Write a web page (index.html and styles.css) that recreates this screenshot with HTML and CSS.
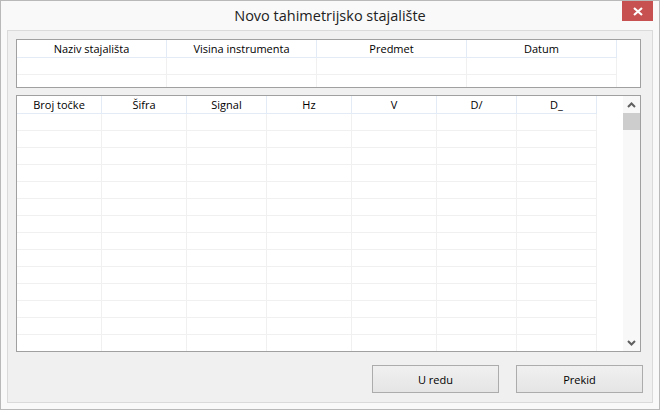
FILE: index.html
```html
<!DOCTYPE html>
<html>
<head>
<meta charset="utf-8">
<link rel="stylesheet" href="styles.css">
</head>
<body>
<div class="window">
  <div class="titlebar">
    <div class="spacer"></div>
    <div class="title">Novo tahimetrijsko stajalište</div>
    <div class="close">
      <svg width="10" height="9" viewBox="0 0 10 9"><path d="M1 1 L9 8 M9 1 L1 8" stroke="#fff" stroke-width="2.2" fill="none"/></svg>
    </div>
  </div>
  <div class="panel">
    <div class="grid grid-top">
      <div class="row head">
        <div class="cell c150">Naziv stajališta</div>
        <div class="cell c150">Visina instrumenta</div>
        <div class="cell c150">Predmet</div>
        <div class="cell c150">Datum</div>
      </div>
      <div class="row">
        <div class="cell c150"></div><div class="cell c150"></div><div class="cell c150"></div><div class="cell c150"></div>
      </div>
      <div class="row">
        <div class="cell c150"></div><div class="cell c150"></div><div class="cell c150"></div><div class="cell c150"></div>
      </div>
    </div>
    <div class="grid grid-main">
      <div class="cols">
        <div class="row head">
          <div class="cell c85">Broj točke</div>
          <div class="cell c85">Šifra</div>
          <div class="cell c80">Signal</div>
          <div class="cell c85">Hz</div>
          <div class="cell c85">V</div>
          <div class="cell c80">D/</div>
          <div class="cell c80">D_</div>
        </div>
        <div class="row"><div class="cell c85"></div><div class="cell c85"></div><div class="cell c80"></div><div class="cell c85"></div><div class="cell c85"></div><div class="cell c80"></div><div class="cell c80"></div></div>
        <div class="row"><div class="cell c85"></div><div class="cell c85"></div><div class="cell c80"></div><div class="cell c85"></div><div class="cell c85"></div><div class="cell c80"></div><div class="cell c80"></div></div>
        <div class="row"><div class="cell c85"></div><div class="cell c85"></div><div class="cell c80"></div><div class="cell c85"></div><div class="cell c85"></div><div class="cell c80"></div><div class="cell c80"></div></div>
        <div class="row"><div class="cell c85"></div><div class="cell c85"></div><div class="cell c80"></div><div class="cell c85"></div><div class="cell c85"></div><div class="cell c80"></div><div class="cell c80"></div></div>
        <div class="row"><div class="cell c85"></div><div class="cell c85"></div><div class="cell c80"></div><div class="cell c85"></div><div class="cell c85"></div><div class="cell c80"></div><div class="cell c80"></div></div>
        <div class="row"><div class="cell c85"></div><div class="cell c85"></div><div class="cell c80"></div><div class="cell c85"></div><div class="cell c85"></div><div class="cell c80"></div><div class="cell c80"></div></div>
        <div class="row"><div class="cell c85"></div><div class="cell c85"></div><div class="cell c80"></div><div class="cell c85"></div><div class="cell c85"></div><div class="cell c80"></div><div class="cell c80"></div></div>
        <div class="row"><div class="cell c85"></div><div class="cell c85"></div><div class="cell c80"></div><div class="cell c85"></div><div class="cell c85"></div><div class="cell c80"></div><div class="cell c80"></div></div>
        <div class="row"><div class="cell c85"></div><div class="cell c85"></div><div class="cell c80"></div><div class="cell c85"></div><div class="cell c85"></div><div class="cell c80"></div><div class="cell c80"></div></div>
        <div class="row"><div class="cell c85"></div><div class="cell c85"></div><div class="cell c80"></div><div class="cell c85"></div><div class="cell c85"></div><div class="cell c80"></div><div class="cell c80"></div></div>
        <div class="row"><div class="cell c85"></div><div class="cell c85"></div><div class="cell c80"></div><div class="cell c85"></div><div class="cell c85"></div><div class="cell c80"></div><div class="cell c80"></div></div>
        <div class="row"><div class="cell c85"></div><div class="cell c85"></div><div class="cell c80"></div><div class="cell c85"></div><div class="cell c85"></div><div class="cell c80"></div><div class="cell c80"></div></div>
        <div class="row"><div class="cell c85"></div><div class="cell c85"></div><div class="cell c80"></div><div class="cell c85"></div><div class="cell c85"></div><div class="cell c80"></div><div class="cell c80"></div></div>
        <div class="row"><div class="cell c85"></div><div class="cell c85"></div><div class="cell c80"></div><div class="cell c85"></div><div class="cell c85"></div><div class="cell c80"></div><div class="cell c80"></div></div>
      </div>
      <div class="scrollbar">
        <div class="arrow">
          <svg width="9" height="6" viewBox="0 0 9 6"><path d="M1 5 L4.5 1.5 L8 5" stroke="#606060" stroke-width="2" fill="none"/></svg>
        </div>
        <div class="thumb"></div>
        <div class="track"></div>
        <div class="arrow">
          <svg width="9" height="6" viewBox="0 0 9 6"><path d="M1 1 L4.5 4.5 L8 1" stroke="#606060" stroke-width="2" fill="none"/></svg>
        </div>
      </div>
    </div>
    <div class="buttons">
      <button class="btn">U redu</button>
      <button class="btn">Prekid</button>
    </div>
  </div>
</div>
</body>
</html>
```

FILE: styles.css
```css
* { box-sizing: border-box; }
html, body { margin: 0; padding: 0; }
body {
  width: 660px;
  height: 410px;
  overflow: hidden;
  font-family: "Open Sans", "Noto Sans", sans-serif;
  background: #f9f9f9;
}
.window {
  width: 660px;
  height: 410px;
  border: 1px solid #b9b9b9;
  background: #f9f9f9;
  display: flex;
  flex-direction: column;
}
.titlebar {
  height: 29px;
  display: grid;
  grid-template-columns: 1fr auto 1fr;
}
.title {
  font-size: 14.5px;
  color: #222;
  line-height: 29px;
  white-space: nowrap;
}
.close {
  justify-self: end;
  align-self: start;
  width: 31px;
  height: 20px;
  margin-right: 6px;
  background: #c75050;
  display: flex;
  align-items: center;
  justify-content: center;
}
.close svg { display: block; }
.panel {
  margin: 0 6px 6px 6px;
  height: 373px;
  border: 1px solid #dadada;
  background: #f0f0f0;
  padding: 8px 9px 9px 8px;
  display: flex;
  flex-direction: column;
}
.grid {
  width: 625px;
  border: 1px solid #a0a0a0;
  background: #fff;
  overflow: hidden;
}
.grid-top {
  height: 49px;
}
.grid-main {
  height: 257px;
  margin-top: 7px;
  display: flex;
}
.row {
  display: flex;
  height: 17px;
}
.row.head {
  height: 18px;
}
.cell {
  height: 100%;
  border-right: 1px solid #f0f0f0;
  border-bottom: 1px solid #f0f0f0;
  font-size: 11px;
  color: #000;
  text-align: center;
  line-height: 17px;
  white-space: nowrap;
  overflow: hidden;
}
.head .cell {
  border-right-color: #e3ebf6;
  border-bottom-color: #e3ebf6;
}
.c150 { width: 150px; }
.c85 { width: 85px; }
.c80 { width: 80px; }
.cols {
  width: 606px;
  flex: none;
}
.scrollbar {
  width: 17px;
  flex: none;
  display: flex;
  flex-direction: column;
  background: #f8f8f8;
}
.arrow {
  height: 17px;
  flex: none;
  display: flex;
  align-items: center;
  justify-content: center;
}
.arrow svg { display: block; }
.thumb {
  height: 17px;
  flex: none;
  background: #cdcdcd;
}
.track { flex: 1; }
.buttons {
  margin-top: 13px;
  display: flex;
  justify-content: flex-end;
  gap: 17px;
}
.btn {
  width: 127px;
  height: 28px;
  border: 1px solid #acacac;
  background: linear-gradient(#f0f0f0, #e5e5e5);
  font-family: "Open Sans", "Noto Sans", sans-serif;
  font-size: 11px;
  color: #000;
  padding: 0;
  margin: 0;
  border-radius: 0;
}
```
